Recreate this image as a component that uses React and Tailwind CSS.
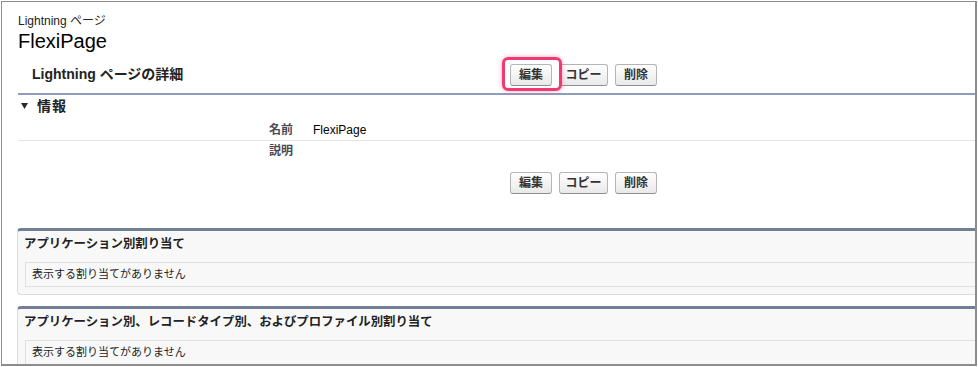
import React from "react";

const FONT = "font-['Liberation_Sans','Noto_Sans_CJK_JP',sans-serif]";

function Btn({ children, w }) {
  return (
    <button
      className={`${w} h-[22px] flex items-center justify-center border border-[#b5b5b5] border-b-[#8f8f8f] rounded-[3px] bg-gradient-to-b from-white to-[#e9e9e9] text-[12px] font-bold text-[#333] leading-none whitespace-nowrap`}
    >
      {children}
    </button>
  );
}

function Buttons({ highlight }) {
  return (
    <div className="relative flex items-center">
      <Btn w="w-[42px]">編集</Btn>
      <div className="ml-[7px]">
        <Btn w="w-[49px]">コピー</Btn>
      </div>
      <div className="ml-[7px]">
        <Btn w="w-[42px]">削除</Btn>
      </div>
      {highlight && (
        <div className="absolute left-[-8px] top-[-7px] w-[60px] h-[34px] border-[3px] border-[#f03a72] rounded-[6px] shadow-[0_0_4px_rgba(240,58,114,0.45)]" />
      )}
    </div>
  );
}

function Section({ title, className = "" }) {
  return (
    <div
      className={`ml-[-1px] border-t-[3px] border-t-[#747e96] border-l border-b border-l-[#dcdcdc] border-b-[#dcdcdc] rounded-tl-[4px] rounded-bl-[4px] bg-[#f8f8f8] pb-[7px] ${className}`}
    >
      <div className="pt-[6px] pb-[11px] pl-[6px] text-[12.4px] leading-[14px] font-bold text-[#222] whitespace-nowrap">
        {title}
      </div>
      <div className="ml-[7px] h-[25px] border-t border-b border-l border-[#e0e0e0] bg-[#f8f8f8] flex items-center pl-[6px] text-[11px] text-[#222] whitespace-nowrap">
        表示する割り当てがありません
      </div>
    </div>
  );
}

export default function App() {
  return (
    <div className={`${FONT} bg-white w-[978px] h-[367px]`}>
      <div className="mt-[1px] ml-[1px] w-[976px] h-[365px] border-l border-t border-r-2 border-b-2 border-[#8c8c8c] overflow-hidden bg-white pl-[16px]">
        <div className="pt-[12px] text-[12px] leading-[14px] text-[#222]">Lightning ページ</div>
        <div className="mt-[1px] text-[20px] leading-[24px] text-[#000]">FlexiPage</div>

        <div className="h-[40px] pt-[3px] flex items-center">
          <div className="w-[492px] pl-[14px] text-[14px] font-bold text-[#222] whitespace-nowrap">
            Lightning ページの詳細
          </div>
          <Buttons highlight />
        </div>
        <div className="h-[2px] bg-[#8e9dbe]" />

        <div className="h-[22px] flex items-center">
          <svg width="7" height="6" viewBox="0 0 7 6" className="ml-[3px]">
            <polygon points="0,0 7,0 3.5,6" fill="#2a2a2a" />
          </svg>
          <span className="ml-[9px] text-[14px] font-bold tracking-[1px] text-[#222]">情報</span>
        </div>

        <div className="mt-[3px] h-[21px] flex items-center border-b border-[#e5e5e5]">
          <div className="w-[283px] pr-[8px] text-right text-[12px] font-bold text-[#4a4a56]">名前</div>
          <div className="pl-[12px] text-[12px] text-[#000]">FlexiPage</div>
        </div>
        <div className="h-[20px] flex items-center">
          <div className="w-[283px] pr-[8px] text-right text-[12px] font-bold text-[#4a4a56]">説明</div>
          <div className="pl-[12px] text-[12px] text-[#000]"></div>
        </div>

        <div className="mt-[11px] ml-[492px]">
          <Buttons />
        </div>

        <Section className="mt-[34px]" title="アプリケーション別割り当て" />
        <Section className="mt-[11px]" title="アプリケーション別、レコードタイプ別、およびプロファイル別割り当て" />
      </div>
    </div>
  );
}
